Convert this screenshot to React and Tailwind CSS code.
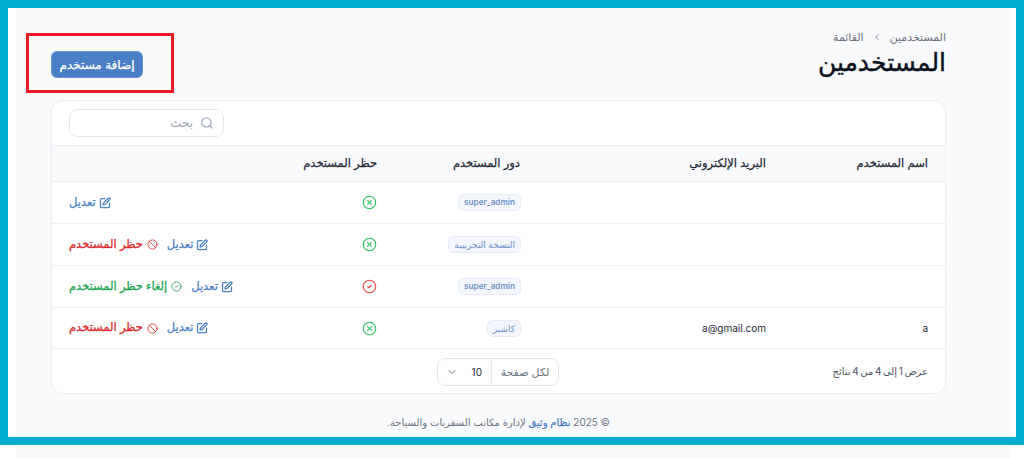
import React from "react";
import { Search, ChevronLeft, ChevronDown, SquarePen, Ban, CircleCheck, CircleX } from "lucide-react";

function Edit() {
  return (
    <span className="flex items-center gap-[3px] text-[#4a7fc7] text-[11.5px] [-webkit-text-stroke:0.25px_currentColor]">
      <SquarePen className="w-[12px] h-[12px]" strokeWidth={2.5} />
      <span>تعديل</span>
    </span>
  );
}

function BanAction() {
  return (
    <span className="flex items-center gap-[4px] text-[#e02424] text-[11.5px] [-webkit-text-stroke:0.25px_currentColor]">
      <Ban className="w-[11px] h-[11px]" strokeWidth={1.75} />
      <span>حظر المستخدم</span>
    </span>
  );
}

function UnbanAction() {
  return (
    <span className="flex items-center gap-[4px] text-[#16a34a] text-[11.5px] [-webkit-text-stroke:0.25px_currentColor]">
      <CircleCheck className="w-[11px] h-[11px]" strokeWidth={1.75} />
      <span>إلغاء حظر المستخدم</span>
    </span>
  );
}

const rows = [
  { h: "h-[42px]", name: "", email: "", role: "super_admin", latin: true, ok: true, actions: [] },
  { h: "h-[42px]", name: "", email: "", role: "النسخة التجريبية", latin: false, ok: true, actions: ["ban"] },
  { h: "h-[42px]", name: "", email: "", role: "super_admin", latin: true, ok: false, actions: ["unban"] },
  { h: "h-[41px]", name: "a", email: "a@gmail.com", role: "كاشير", latin: false, ok: true, actions: ["ban"] },
];

export default function App() {
  return (
    <div
      dir="rtl"
      className="relative w-[1024px] h-[458px] overflow-hidden bg-white text-[#111827]"
      style={{ fontFamily: 'Inter, "DejaVu Sans", sans-serif' }}
    >
      <div className="ml-[16px] mr-[14px] h-full bg-[#f9fafb] flex flex-col pt-[30px] pr-[64px] pl-[35px]">
        <div className="flex items-start justify-between h-[70px]">
          <div className="flex flex-col">
            <div className="flex items-center gap-[5px] text-[11px] leading-[14px] text-[#6b7280]">
              <span>المستخدمين</span>
              <ChevronLeft className="w-[10px] h-[10px] mx-[3px]" />
              <span>القائمة</span>
            </div>
            <h1 className="mt-[3px] text-[25px] leading-[30px] text-[#0b1220] [-webkit-text-stroke:0.4px_currentColor]">المستخدمين</h1>
          </div>
          <button className="mt-[21px] w-[92px] h-[27px] rounded-md bg-[#4a7fc7] border border-[#6b97d3] text-white text-[12px] [-webkit-text-stroke:0.25px_currentColor] flex items-center justify-center">
            إضافة مستخدم
          </button>
        </div>

        <div className="w-[895px] h-[294px] bg-white rounded-xl border border-[#e9ecf1] overflow-hidden flex flex-col">
          <div className="h-[44px] shrink-0 flex items-center justify-end pl-[17px]">
            <div className="w-[155px] h-[28px] border border-[#e5e7eb] rounded-lg flex items-center gap-[7px] pr-[9px] text-[#9ca3af] text-[12px]">
              <Search className="w-[14px] h-[14px] text-[#8b98b0]" strokeWidth={1.75} />
              <span>بحث</span>
            </div>
          </div>

          <table className="w-full table-fixed border-collapse">
            <colgroup>
              <col className="w-[161px]" />
              <col className="w-[246px]" />
              <col className="w-[143px]" />
              <col className="w-[90px]" />
              <col />
            </colgroup>
            <thead>
              <tr className="h-[36px] bg-[#f9fafb] border-y border-[#e9ecf1] text-[11.5px] text-[#1f2937] [-webkit-text-stroke:0.25px_currentColor]">
                <th className="pr-[17px] text-right font-normal">اسم المستخدم</th>
                <th className="pr-[18px] text-right font-normal">البريد الإلكتروني</th>
                <th className="pr-[18px] text-right font-normal">دور المستخدم</th>
                <th className="pr-[18px] text-right font-normal" colSpan={2}>حظر المستخدم</th>
              </tr>
            </thead>
            <tbody>
              {rows.map((r, i) => (
                <tr key={i} className={`${r.h} border-b border-[#eef0f4] text-[10px] text-[#1f2937]`}>
                  <td className="pr-[17px]">{r.name}</td>
                  <td className="pr-[18px]">{r.email}</td>
                  <td className="pr-[17px]">
                    <span
                      className={`inline-block h-[17px] leading-[15px] px-[5px] rounded-[5px] bg-[#f3f6fc] border border-[#e6ecf7] text-[#6f93c9] ${r.latin ? "font-semibold text-[8.2px]" : "text-[9px]"}`}
                    >
                      {r.role}
                    </span>
                  </td>
                  <td className="pr-[18px]">
                    {r.ok ? (
                      <CircleX className="w-[15px] h-[15px] text-[#22c55e]" strokeWidth={1.75} />
                    ) : (
                      <CircleCheck className="w-[15px] h-[15px] text-[#ef4444]" strokeWidth={1.75} />
                    )}
                  </td>
                  <td className="pl-[17px]">
                    <div className="flex items-center justify-end gap-[9px]">
                      <Edit />
                      {r.actions.includes("ban") && <BanAction />}
                      {r.actions.includes("unban") && <UnbanAction />}
                    </div>
                  </td>
                </tr>
              ))}
            </tbody>
          </table>

          <div className="flex-1 relative flex items-center pr-[17px]">
            <span className="text-[10px] text-[#4b5563] [word-spacing:-1.2px]">عرض 1 إلى 4 من 4 نتائج</span>
            <div className="absolute left-[385px] top-[9px] w-[122px] h-[28px] border border-[#e5e7eb] rounded-lg flex items-center text-[11px] text-[#6b7280]">
              <span className="w-[67px] h-full flex items-center justify-center border-l border-[#e5e7eb]">لكل صفحة</span>
              <span className="flex-1 flex items-center justify-between pr-[9px] pl-[8px] text-[#1f2937] text-[10px]" dir="ltr">
                <ChevronDown className="w-[12px] h-[12px] text-[#6b7280]" />
                <span>10</span>
              </span>
            </div>
          </div>
        </div>

        <div className="mt-[21px] text-center text-[10px] text-[#6b7280] w-[895px]">
          © 2025 <span className="text-[#4a7fc7] [-webkit-text-stroke:0.25px_currentColor]">نظام وثيق</span> لإدارة مكاتب السفريات والسياحة.
        </div>
      </div>

      {/* annotation overlays */}
      <div className="absolute left-0 top-0 w-[1024px] h-[445px] border-[8px] border-[#00acd0] pointer-events-none" />
      <div className="absolute left-[26px] top-[33px] w-[148px] h-[60px] border-[3px] border-[#ed1c24] pointer-events-none" />
    </div>
  );
}
